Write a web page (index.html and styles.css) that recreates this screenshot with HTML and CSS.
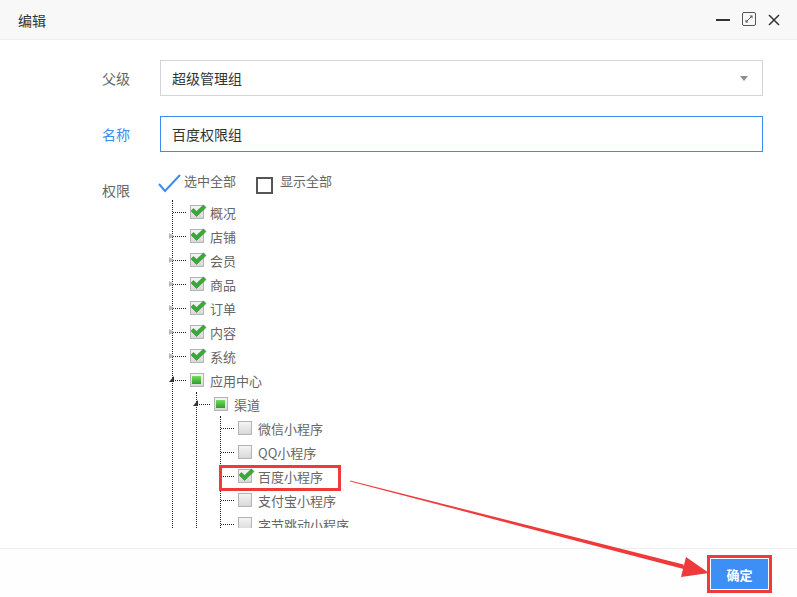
FILE: index.html
```html
<!DOCTYPE html>
<html lang="zh-CN">
<head>
    <meta charset="UTF-8">
    <title>编辑</title>
    <link rel="stylesheet" href="styles.css">
</head>
<body>
    <div class="layer">
        <div class="layer-title">
            <span class="title-text">编辑</span>
            <div class="layer-btns">
                <svg class="btn-min" width="14" height="14" viewBox="0 0 14 14"><rect x="0" y="6" width="14" height="2" fill="#333"/></svg>
                <svg class="btn-max" width="15" height="15" viewBox="0 0 15 15">
                    <rect x="0.5" y="0.5" width="13" height="13" rx="1.5" fill="none" stroke="#555"/>
                    <path d="M4 10 L10 4" stroke="#555" stroke-width="1"/>
                    <path d="M7.5 3.5 L10.5 3.5 L10.5 6.5 Z" fill="#555"/>
                    <path d="M3.5 7.5 L3.5 10.5 L6.5 10.5 Z" fill="#555"/>
                </svg>
                <svg class="btn-close" width="12" height="12" viewBox="0 0 12 12"><path d="M1 1 L11 11 M11 1 L1 11" stroke="#333" stroke-width="1.5"/></svg>
            </div>
        </div>

        <div class="layer-content">
            <div class="form-row">
                <label class="form-label">父级</label>
                <div class="form-field">
                    <div class="select">
                        <span>超级管理组</span>
                        <i class="select-arrow"></i>
                    </div>
                </div>
            </div>
            <div class="form-row">
                <label class="form-label active">名称</label>
                <div class="form-field">
                    <div class="input focus">百度权限组</div>
                </div>
            </div>
            <div class="form-row">
                <label class="form-label">权限</label>
                <div class="form-field">
                    <div class="check-all">
                        <svg class="all-tick" width="24" height="19" viewBox="0 0 24 19"><path d="M1 10 L7 17 L22 1" fill="none" stroke="#3b8cf0" stroke-width="2"/></svg>
                        <span class="all-text">选中全部</span>
                        <span class="square"></span>
                        <span class="show-text">显示全部</span>
                    </div>

                    <div class="tree-box">
                        <ul class="tree">
                            <li><div class="node"><span class="line"></span><span class="cb checked"><svg width="17" height="14" viewBox="0 0 17 14"><polygon points="1,7 3.5,4.5 6.5,7.5 13.5,1 16,3.5 6.5,12.5" fill="#3aa93a" stroke="#2a8a2a" stroke-width="0.6"/></svg></span><span class="text">概况</span></div></li>
                            <li><div class="node"><i class="sw closed"></i><span class="line"></span><span class="cb checked"><svg width="17" height="14" viewBox="0 0 17 14"><polygon points="1,7 3.5,4.5 6.5,7.5 13.5,1 16,3.5 6.5,12.5" fill="#3aa93a" stroke="#2a8a2a" stroke-width="0.6"/></svg></span><span class="text">店铺</span></div></li>
                            <li><div class="node"><i class="sw closed"></i><span class="line"></span><span class="cb checked"><svg width="17" height="14" viewBox="0 0 17 14"><polygon points="1,7 3.5,4.5 6.5,7.5 13.5,1 16,3.5 6.5,12.5" fill="#3aa93a" stroke="#2a8a2a" stroke-width="0.6"/></svg></span><span class="text">会员</span></div></li>
                            <li><div class="node"><i class="sw closed"></i><span class="line"></span><span class="cb checked"><svg width="17" height="14" viewBox="0 0 17 14"><polygon points="1,7 3.5,4.5 6.5,7.5 13.5,1 16,3.5 6.5,12.5" fill="#3aa93a" stroke="#2a8a2a" stroke-width="0.6"/></svg></span><span class="text">商品</span></div></li>
                            <li><div class="node"><i class="sw closed"></i><span class="line"></span><span class="cb checked"><svg width="17" height="14" viewBox="0 0 17 14"><polygon points="1,7 3.5,4.5 6.5,7.5 13.5,1 16,3.5 6.5,12.5" fill="#3aa93a" stroke="#2a8a2a" stroke-width="0.6"/></svg></span><span class="text">订单</span></div></li>
                            <li><div class="node"><i class="sw closed"></i><span class="line"></span><span class="cb checked"><svg width="17" height="14" viewBox="0 0 17 14"><polygon points="1,7 3.5,4.5 6.5,7.5 13.5,1 16,3.5 6.5,12.5" fill="#3aa93a" stroke="#2a8a2a" stroke-width="0.6"/></svg></span><span class="text">内容</span></div></li>
                            <li><div class="node"><i class="sw closed"></i><span class="line"></span><span class="cb checked"><svg width="17" height="14" viewBox="0 0 17 14"><polygon points="1,7 3.5,4.5 6.5,7.5 13.5,1 16,3.5 6.5,12.5" fill="#3aa93a" stroke="#2a8a2a" stroke-width="0.6"/></svg></span><span class="text">系统</span></div></li>
                            <li>
                                <div class="node"><i class="sw open"></i><span class="line"></span><span class="cb half"></span><span class="text">应用中心</span></div>
                                <ul>
                                    <li>
                                        <div class="node"><i class="sw open"></i><span class="line"></span><span class="cb half"></span><span class="text">渠道</span></div>
                                        <ul>
                                            <li><div class="node"><span class="line"></span><span class="cb"></span><span class="text">微信小程序</span></div></li>
                                            <li><div class="node"><span class="line"></span><span class="cb"></span><span class="text">QQ小程序</span></div></li>
                                            <li><div class="node marked"><span class="line"></span><span class="cb checked"><svg width="17" height="14" viewBox="0 0 17 14"><polygon points="1,7 3.5,4.5 6.5,7.5 13.5,1 16,3.5 6.5,12.5" fill="#3aa93a" stroke="#2a8a2a" stroke-width="0.6"/></svg></span><span class="text">百度小程序</span></div></li>
                                            <li><div class="node"><span class="line"></span><span class="cb"></span><span class="text">支付宝小程序</span></div></li>
                                            <li><div class="node"><span class="line"></span><span class="cb"></span><span class="text">字节跳动小程序</span></div></li>
                                        </ul>
                                    </li>
                                </ul>
                            </li>
                        </ul>
                    </div>
                </div>
            </div>
        </div>

        <div class="layer-footer">
            <button class="btn-ok">确定</button>
        </div>
    </div>

    <svg class="pointer" width="797" height="597" viewBox="0 0 797 597">
        <polygon points="350,480.5 350.2,481.5 684.6,569.2 683.4,564.4" fill="#ee3a3a"/>
        <polygon points="709,573 686,557 681,577" fill="#ee3a3a"/>
    </svg>
</body>
</html>
```

FILE: styles.css
```css
html, body {
    margin: 0;
    padding: 0;
    height: 100%;
    overflow: hidden;
}

body {
    font-family: "Noto Sans CJK SC", "Noto Sans", sans-serif;
    background-color: #fff;
    color: #333;
    position: relative;
}

.layer {
    display: flex;
    flex-direction: column;
    height: 597px;
}

.layer-title {
    height: 39px;
    border-bottom: 1px solid #eee;
    background-color: #f8f8f8;
    display: flex;
    align-items: center;
    justify-content: space-between;
    padding: 0 17px 0 18px;
}

.title-text {
    font-size: 14px;
    color: #333;
}

.layer-btns {
    display: flex;
    align-items: center;
}

.btn-min {
    margin-right: 12px;
}

.btn-max {
    margin-right: 11px;
}

.layer-content {
    height: 488px;
    padding: 20px 34px 0 0;
    overflow: hidden;
}

.form-row {
    display: flex;
    margin-bottom: 20px;
}

.form-label {
    width: 160px;
    box-sizing: border-box;
    padding-right: 30px;
    text-align: right;
    line-height: 36px;
    font-size: 14px;
    color: #666;
}

.form-label.active {
    color: #3b8cf0;
}

.form-field {
    flex: 1;
}

.select,
.input {
    height: 36px;
    box-sizing: border-box;
    border: 1px solid #d4d4dc;
    padding: 0 11px;
    font-size: 14px;
    line-height: 34px;
    color: #333;
    display: flex;
    justify-content: space-between;
    align-items: center;
}

.input.focus {
    border-color: #3b8cf0;
}

.select-arrow {
    width: 0;
    height: 0;
    border-left: 4px solid transparent;
    border-right: 4px solid transparent;
    border-top: 5px solid #8a9098;
    margin-right: 3px;
}

.check-all {
    display: flex;
    align-items: flex-start;
    height: 20px;
    font-size: 13px;
    color: #666;
}

.all-tick {
    margin-left: -2px;
    margin-top: 2px;
}

.all-text {
    margin-left: 2px;
    line-height: 18px;
}

.square {
    width: 13px;
    height: 13px;
    border: 2px solid #555;
    margin: 5px 0 0 20px;
}

.show-text {
    margin-left: 7px;
    line-height: 18px;
}

.tree-box {
    margin-top: 8px;
    height: 328px;
    overflow: hidden;
}

.tree,
.tree ul {
    list-style: none;
    margin: 0;
    padding: 0;
    border-left: 1px dotted #222;
}

.tree {
    margin-left: 12px;
}

.tree ul {
    margin-left: 23px;
}

.node {
    position: relative;
    display: flex;
    align-items: center;
    height: 24px;
    font-size: 13px;
    color: #666;
}

.line {
    width: 13px;
    border-top: 1px dotted #222;
}

.cb {
    position: relative;
    width: 12px;
    height: 12px;
    margin-left: 4px;
    border: 1px solid #b4b4b4;
    background: linear-gradient(#f4f4f4, #d8d8d8);
}

.cb svg {
    position: absolute;
    left: -1px;
    top: -2px;
}

.cb.half::after {
    content: "";
    position: absolute;
    left: 1px;
    top: 2px;
    width: 9px;
    height: 8px;
    background: linear-gradient(#74dc5a, #2c9e2c);
}

.text {
    margin-left: 6px;
}

.sw {
    position: absolute;
    left: -4px;
    top: 9px;
    width: 0;
    height: 0;
}

.sw.closed {
    border-top: 3px solid transparent;
    border-bottom: 3px solid transparent;
    border-left: 5px solid #b8b8b8;
}

.sw.open {
    top: 8px;
    border-left: 5px solid transparent;
    border-bottom: 6px solid #333;
}

.node.marked::before {
    content: "";
    position: absolute;
    left: -2px;
    top: 1px;
    width: 116px;
    height: 20px;
    border: 3px solid #ee3a3a;
}

.layer-footer {
    flex: 1;
    border-top: 1px solid #eee;
    background-color: #fefefe;
    display: flex;
    justify-content: flex-end;
    align-items: flex-start;
    padding: 10px 29px 0 0;
}

.btn-ok {
    width: 57px;
    height: 30px;
    border: none;
    background-color: #3d8ef5;
    color: #fff;
    font-family: inherit;
    font-size: 13px;
    font-weight: bold;
    outline: 3px solid #ee3a3a;
    outline-offset: 1px;
    cursor: pointer;
}

.pointer {
    position: absolute;
    left: 0;
    top: 0;
    pointer-events: none;
}
```
